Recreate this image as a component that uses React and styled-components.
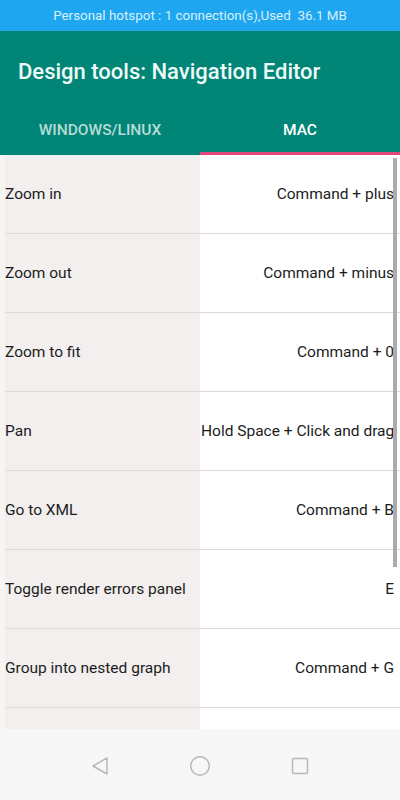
import React from 'react';
import styled, { createGlobalStyle } from 'styled-components';

const GlobalStyle = createGlobalStyle`
  body {
    margin: 0;
    font-family: Roboto, "Noto Sans", sans-serif;
    background: #fafafa;
  }
`;

const Screen = styled.div`
  width: 400px;
  height: 800px;
  display: flex;
  flex-direction: column;
  overflow: hidden;
`;

const StatusBar = styled.div`
  height: 31px;
  background: #1ea7f0;
  color: #d8f0fc;
  font-size: 13.4px;
  display: flex;
  align-items: center;
  justify-content: center;
`;

const Header = styled.div`
  background: #008577;
  color: #ffffff;
`;

const Title = styled.div`
  height: 73px;
  display: flex;
  align-items: center;
  padding-left: 18px;
  padding-top: 8px;
  box-sizing: border-box;
  font-size: 22px;
  font-weight: 500;
  color: #eefaf7;
`;

const Tabs = styled.div`
  display: flex;
  height: 51px;
`;

const Tab = styled.div`
  flex: 1;
  display: flex;
  align-items: center;
  justify-content: center;
  font-size: 15.5px;
  font-weight: 500;
  color: ${p => (p.$active ? '#ffffff' : 'rgba(255,255,255,0.72)')};
  border-bottom: 3px solid ${p => (p.$active ? '#e0457b' : 'transparent')};
  box-sizing: border-box;
  padding-top: 4px;
`;

const Content = styled.div`
  flex: 1;
  position: relative;
  overflow: hidden;
  padding-left: 5px;
  background: #f7f5f4;
`;

const Row = styled.div`
  display: flex;
  height: 78px;
  border-bottom: 1px solid #dddbda;
`;

const Action = styled.div`
  width: 195px;
  flex-shrink: 0;
  background: #f2efee;
  display: flex;
  align-items: center;
  font-size: 15.5px;
  color: #1c1c1c;
`;

const Keys = styled.div`
  flex: 1;
  min-width: 0;
  background: #ffffff;
  display: flex;
  align-items: center;
  padding-right: 6px;
  font-size: 15.5px;
  color: #1c1c1c;
  white-space: nowrap;
`;

const KeysText = styled.div`
  text-align: right;
  width: 100%;
  padding-left: 1px;
`;

const Scrollbar = styled.div`
  position: absolute;
  right: 3px;
  top: 3px;
  width: 4px;
  height: 409px;
  background: #ababab;
`;

const NavBar = styled.div`
  height: 69px;
  background: #f7f7f7;
  display: flex;
  align-items: center;
  justify-content: center;
  gap: 72px;
  padding-top: 2px;
`;

const NavButton = styled.div`
  width: 28px;
  display: flex;
  justify-content: center;
`;

const rows = [
  ['Zoom in', 'Command + plus'],
  ['Zoom out', 'Command + minus'],
  ['Zoom to fit', 'Command + 0'],
  ['Pan', 'Hold Space + Click and drag'],
  ['Go to XML', 'Command + B'],
  ['Toggle render errors panel', 'E'],
  ['Group into nested graph', 'Command + G'],
  ['', ''],
];

export default function App() {
  return (
    <Screen>
      <GlobalStyle />
      <StatusBar>Personal hotspot : 1 connection(s),Used&nbsp; 36.1 MB</StatusBar>
      <Header>
        <Title>Design tools: Navigation Editor</Title>
        <Tabs>
          <Tab>WINDOWS/LINUX</Tab>
          <Tab $active>MAC</Tab>
        </Tabs>
      </Header>
      <Content>
        {rows.map(([a, k], i) => (
          <Row key={i}>
            <Action>{a}</Action>
            <Keys>
              <KeysText>{k}</KeysText>
            </Keys>
          </Row>
        ))}
        <Scrollbar />
      </Content>
      <NavBar>
        <NavButton>
          <svg width="20" height="20" viewBox="0 0 20 20">
            <path d="M17 2 L3 10 L17 18 Z" fill="none" stroke="#b9b9b9" strokeWidth="1.5" strokeLinejoin="round" />
          </svg>
        </NavButton>
        <NavButton>
          <svg width="22" height="22" viewBox="0 0 22 22">
            <circle cx="11" cy="11" r="9.3" fill="none" stroke="#b9b9b9" strokeWidth="1.5" />
          </svg>
        </NavButton>
        <NavButton>
          <svg width="18" height="18" viewBox="0 0 18 18">
            <rect x="1.5" y="1.5" width="15" height="15" rx="1.5" fill="none" stroke="#b9b9b9" strokeWidth="1.5" />
          </svg>
        </NavButton>
      </NavBar>
    </Screen>
  );
}
